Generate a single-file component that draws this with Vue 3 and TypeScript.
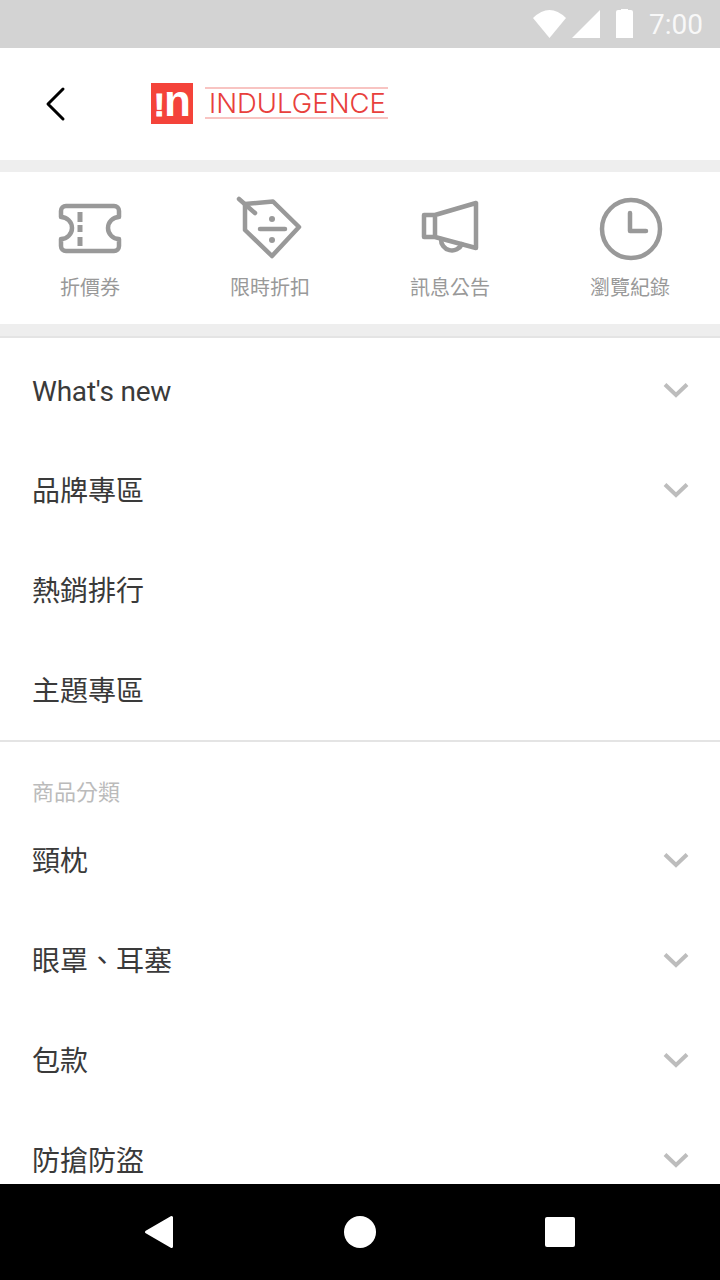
<script setup lang="ts">
interface MenuItem {
  label: string
  arrow: boolean
  latin?: boolean
}

const shortcuts = ['折價券', '限時折扣', '訊息公告', '瀏覽紀錄']

const mainMenu: MenuItem[] = [
  { label: "What's new", arrow: true, latin: true },
  { label: '品牌專區', arrow: true },
  { label: '熱銷排行', arrow: false },
  { label: '主題專區', arrow: false },
]

const categories: MenuItem[] = [
  { label: '頸枕', arrow: true },
  { label: '眼罩、耳塞', arrow: true },
  { label: '包款', arrow: true },
  { label: '防搶防盜', arrow: true },
]
</script>

<template>
  <div class="screen">
    <div class="status-bar">
      <svg class="status-icons" width="110" height="48" viewBox="0 0 110 48">
        <path d="M3 18Q19.5 2 36 18L19.5 38Z" fill="#fff" />
        <path d="M70 10V38H42Z" fill="#fff" />
        <path d="M86 12a2 2 0 0 1 2-2h3V9h7v1h3a2 2 0 0 1 2 2v26H86Z" fill="#fff" />
      </svg>
      <span class="status-time">7:00</span>
    </div>

    <header class="top-bar">
      <svg class="back" width="24" height="40" viewBox="0 0 24 40">
        <path d="M19 5 4 20l15 15" fill="none" stroke="#000" stroke-width="3" stroke-linecap="round" stroke-linejoin="round" />
      </svg>
      <div class="logo">
        <span class="logo-mark"><span class="logo-bang">!</span><span class="logo-n">n</span></span>
        <span class="logo-name">INDULGENCE</span>
      </div>
    </header>

    <nav class="shortcuts">
      <div class="shortcut">
        <svg width="72" height="72" viewBox="0 0 72 72" class="shortcut-icon">
          <path d="M12 13H60a5 5 0 0 1 5 5v6A11 11 0 0 0 65 46v7a5 5 0 0 1-5 5H12a5 5 0 0 1-5-5v-7A11 11 0 0 0 7 24v-6a5 5 0 0 1 5-5Z" />
          <path d="M26 19V29M26 32V39M26 44V53" stroke-width="5" stroke-linecap="butt" />
        </svg>
        <span>{{ shortcuts[0] }}</span>
      </div>
      <div class="shortcut">
        <svg width="72" height="72" viewBox="0 0 72 72" class="shortcut-icon">
          <path d="M11 11 39 8.500 65 34 38 63 11 37Z" />
          <path d="M5 6 21 20M26 36H51" />
          <circle cx="38" cy="26" r="3" class="dot" />
          <circle cx="38" cy="47" r="3" class="dot" />
        </svg>
        <span>{{ shortcuts[1] }}</span>
      </div>
      <div class="shortcut">
        <svg width="72" height="72" viewBox="0 0 72 72" class="shortcut-icon">
          <path d="M10 22H21V44H10ZM21 22 62 10V55L21 44Z" />
          <path d="M27 46A11 11 0 0 0 48 51" />
        </svg>
        <span>{{ shortcuts[2] }}</span>
      </div>
      <div class="shortcut">
        <svg width="72" height="72" viewBox="0 0 72 72" class="shortcut-icon">
          <circle cx="37" cy="36" r="29" />
          <path d="M36 20V38H52" />
        </svg>
        <span>{{ shortcuts[3] }}</span>
      </div>
    </nav>

    <main class="drawer">
      <ul class="menu menu-main">
        <li v-for="item in mainMenu" :key="item.label" class="menu-row">
          <span :class="item.latin ? 'latin' : 'cjk'">{{ item.label }}</span>
          <svg v-if="item.arrow" class="chevron" width="26" height="16" viewBox="0 0 26 16">
            <path d="M2 2.500 13 13 24 2.500" />
          </svg>
        </li>
      </ul>
      <p class="section-title">商品分類</p>
      <ul class="menu">
        <li v-for="item in categories" :key="item.label" class="menu-row">
          <span class="cjk">{{ item.label }}</span>
          <svg v-if="item.arrow" class="chevron" width="26" height="16" viewBox="0 0 26 16">
            <path d="M2 2.500 13 13 24 2.500" />
          </svg>
        </li>
      </ul>
    </main>

    <footer class="nav-bar">
      <svg width="32" height="36" viewBox="0 0 32 36">
        <path d="M2.500 18 27.500 3.500V32.500Z" fill="#fff" stroke="#fff" stroke-width="3" stroke-linejoin="round" />
      </svg>
      <svg width="32" height="36" viewBox="0 0 32 36">
        <circle cx="16" cy="18" r="16" fill="#fff" />
      </svg>
      <svg width="32" height="36" viewBox="0 0 32 36">
        <rect x="1" y="3" width="30" height="30" rx="2" fill="#fff" />
      </svg>
    </footer>
  </div>
</template>

<style>
html,
body {
  margin: 0;
  background: #fff;
}
</style>

<style scoped>
.screen {
  display: flex;
  flex-direction: column;
  width: 720px;
  height: 1280px;
  overflow: hidden;
  font-family: Roboto, "Noto Sans CJK TC", sans-serif;
  background: #fff;
}

.status-bar {
  flex: none;
  display: flex;
  align-items: center;
  justify-content: flex-end;
  height: 48px;
  padding-right: 17px;
  background: #d3d3d3;
}

.status-icons {
  margin-right: 9px;
}

.status-time {
  font-size: 28px;
  color: rgba(255, 255, 255, 0.85);
}

.top-bar {
  flex: none;
  display: flex;
  align-items: center;
  height: 112px;
  padding-left: 44px;
  border-bottom: 12px solid #eee;
}

.logo {
  display: flex;
  align-items: center;
  margin-bottom: 2px;
  margin-left: 83px;
}

.logo-mark {
  display: flex;
  align-items: baseline;
  box-sizing: border-box;
  width: 42px;
  height: 41px;
  margin-right: 12px;
  padding-left: 3px;
  font-family: "Liberation Sans", sans-serif;
  font-weight: 700;
  line-height: 36px;
  color: #fff;
  background: #f4433a;
}

.logo-bang {
  width: 10px;
  font-size: 32px;
  -webkit-text-stroke: 1px #fff;
}

.logo-n {
  font-size: 44px;
}

.logo-name {
  width: 179px;
  padding-left: 4px;
  font-family: Inter, sans-serif;
  font-size: 27.500px;
  font-weight: 300;
  line-height: 28px;
  white-space: nowrap;
  color: #e8403c;
  border-top: 2px solid #f8c4c2;
  border-bottom: 2px solid #f8c4c2;
}

.shortcuts {
  flex: none;
  display: grid;
  grid-template-columns: repeat(4, 1fr);
  height: 152px;
  border-bottom: 12px solid #eee;
}

.shortcut {
  display: flex;
  flex-direction: column;
  align-items: center;
  padding-top: 21px;
  font-size: 20px;
  line-height: 28px;
  color: #999;
}

.shortcut-icon {
  margin-bottom: 9px;
  fill: none;
  stroke: #999;
  stroke-width: 4.500;
  stroke-linecap: round;
  stroke-linejoin: round;
}

.dot {
  fill: #999;
  stroke: none;
}

.drawer {
  flex: 1;
  min-height: 0;
  overflow: hidden;
  border-top: 2px solid #e4e4e4;
}

.menu {
  margin: 0;
  padding: 0;
  list-style: none;
}

.menu-main {
  padding-top: 2px;
  border-bottom: 2px solid #e4e4e4;
}

.menu-row {
  display: flex;
  align-items: center;
  justify-content: space-between;
  height: 100px;
  padding: 0 31px 0 32px;
  font-size: 28px;
  color: #3a3a3a;
}

.latin {
  padding-top: 2px;
  letter-spacing: -0.2px;
}

.cjk {
  padding-bottom: 2px;
}

.section-title {
  margin: 0;
  padding: 34px 32px 0;
  font-size: 22px;
  line-height: 34px;
  color: #bbb;
}

.chevron {
  fill: none;
  stroke: #bdbdbd;
  stroke-width: 4;
}

.nav-bar {
  flex: none;
  display: flex;
  align-items: center;
  justify-content: center;
  gap: 168px;
  height: 96px;
  background: #000;
}
</style>
